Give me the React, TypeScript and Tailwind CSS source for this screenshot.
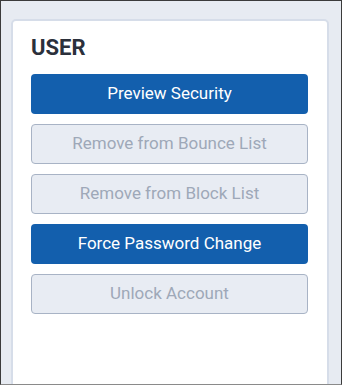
const actions = [
  { label: "Preview Security", enabled: true },
  { label: "Remove from Bounce List", enabled: false },
  { label: "Remove from Block List", enabled: false },
  { label: "Force Password Change", enabled: true },
  { label: "Unlock Account", enabled: false },
];

export default function App() {
  return (
    <div
      className="w-[342px] h-[385px] overflow-hidden border border-[#3b3b3b] border-b-[#8a8a8a] bg-[#e7ebf2] pl-[10px] pr-[12px] pt-[18px]"
      style={{ fontFamily: "Roboto, 'Liberation Sans', sans-serif" }}
    >
      <div className="h-[400px] rounded-[5px] border-2 border-[#d6dde9] bg-white pl-[18px] pr-[19px] pt-[13px]">
        <h2 className="text-[22px] leading-[28px] font-bold text-[#2b303b]">USER</h2>
        <div className="mt-[12px] flex flex-col gap-[10px]">
          {actions.map((a) =>
            a.enabled ? (
              <button
                key={a.label}
                className="h-[40px] w-full rounded-[4px] bg-[#135fad] text-[17px] text-white"
              >
                {a.label}
              </button>
            ) : (
              <button
                key={a.label}
                disabled
                className="h-[40px] w-full rounded-[4px] border border-[#a8b3c5] bg-[#e8ecf3] text-[17px] text-[#9ea8b8]"
              >
                {a.label}
              </button>
            )
          )}
        </div>
      </div>
    </div>
  );
}
